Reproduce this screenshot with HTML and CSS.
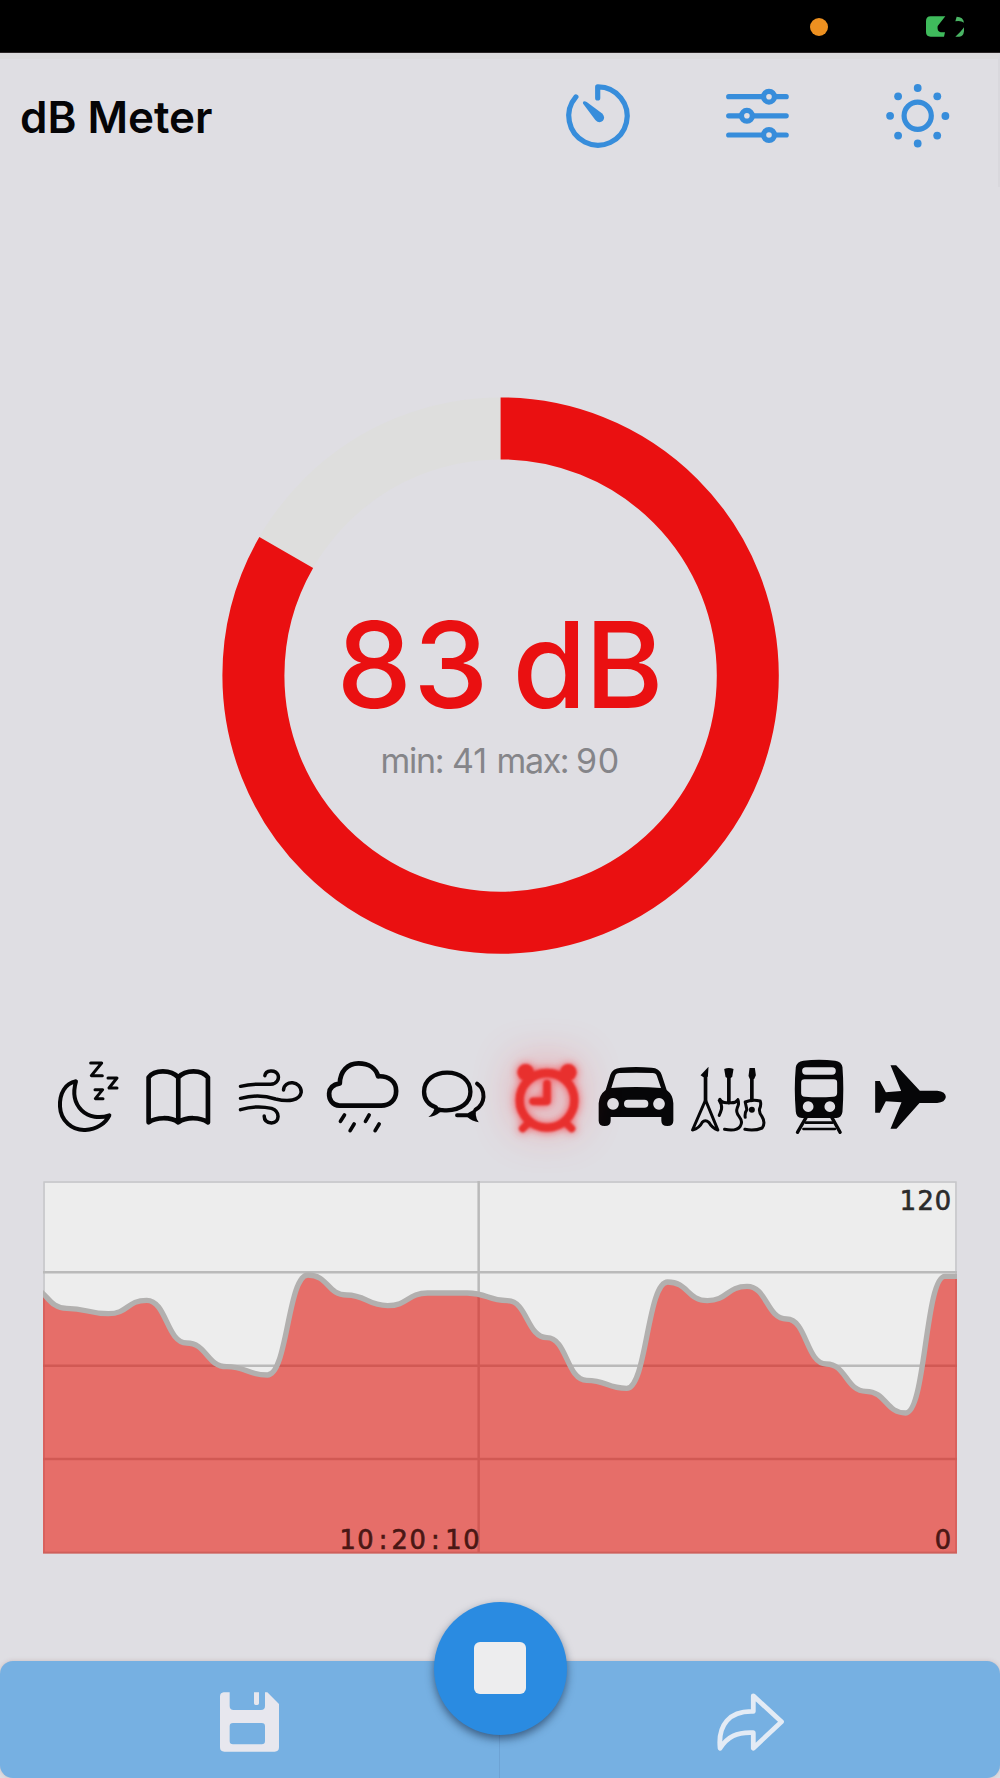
FILE: index.html
```html
<!DOCTYPE html>
<html lang="en">
<head>
<meta charset="utf-8">
<title>dB Meter</title>
<link rel="stylesheet" href="styles.css">
</head>
<body>
<div class="app">
  <div class="status">
    <span class="mic-dot"></span>
    <svg class="battery" width="38" height="21" viewBox="0 0 114 63">
      <path fill="#3fbb5c" d="M14 1H58L35 30Q32 46 44 49H57L54 62H14Q0 62 0 48V15Q0 1 14 1Z"/>
      <path fill="#4ab565" d="M92 2Q112 2 114 20Q105 13 88 16ZM114 34V46Q112 62 100 62H88Q106 46 114 34Z"/>
    </svg>
  </div>

  <header class="toolbar">
    <h1 class="title">dB Meter</h1>
    <nav class="tools">
      <svg class="tool" viewBox="0.3 0 80 80" fill="none" stroke-linecap="round" stroke-linejoin="round">
        <path d="M18.2 20.9A29.2 29.2 0 1 0 40 10.8V22"/>
        <path class="solid" d="M25.8 25.4Q27 24.7 29 26L44.5 37.5Q48 41.5 45.2 44.8Q41.5 48 37.6 44L25.4 27.8Q24.8 26.3 25.8 25.4Z"/>
      </svg>
      <svg class="tool" viewBox="0.3 0 80 80" fill="none" stroke-linecap="round">
        <path d="M11 20.7H45M57 20.7H68.5M11 39.8H23M35 39.8H68.5M11 59H45M57 59H68.5"/>
        <circle cx="51.3" cy="20.7" r="5.4"/><circle cx="29.2" cy="39.8" r="5.4"/><circle cx="51.3" cy="59" r="5.4"/>
      </svg>
      <svg class="tool" viewBox="0.3 0 80 80" fill="none">
        <circle cx="40" cy="39.8" r="13.6"/>
        <g class="solid">
          <circle cx="40" cy="12" r="3.9"/><circle cx="59.6" cy="20.3" r="3.9"/><circle cx="67.7" cy="40" r="3.9"/><circle cx="59.5" cy="59.6" r="3.9"/>
          <circle cx="40" cy="67.5" r="3.9"/><circle cx="20.4" cy="59.6" r="3.9"/><circle cx="12.4" cy="39.8" r="3.9"/><circle cx="20.4" cy="20.3" r="3.9"/>
        </g>
      </svg>
    </nav>
  </header>

  <main class="main">
    <section class="gauge">
      <svg width="560" height="560" viewBox="-280.6 -280.6 560 560">
        <circle class="track" r="247.2"/>
        <circle class="level" r="247.2" pathLength="100" stroke-dasharray="83.3 100" transform="rotate(-90)"/>
        <text class="value" y="31.9"><tspan x="-164" textLength="152">83</tspan><tspan x="12" textLength="151">dB</tspan></text>
        <text class="range" y="97.2"><tspan x="-120" textLength="64">min:</tspan><tspan x="-48.5" textLength="35">41</tspan><tspan x="-4" textLength="73">max:</tspan><tspan x="75.5" textLength="43">90</tspan></text>
      </svg>
    </section>

    <section class="scenes">
      <svg class="scene" viewBox="9 0 274.2 330">
        <path class="line" stroke-width="12" d="M108 124C76 130 58 160 60 200C62 242 96 272 136 270C170 268 197 250 208 226C180 236 146 232 125 211C102 188 98 158 108 124Z"/>
        <path class="line" stroke-width="9" d="M152 69H185L154 107H187M204 114H231L207 144H231M165 149H188L166 176H189"/>
      </svg>
      <svg class="scene" viewBox="283.2 0 274.2 330">
        <path class="line" stroke-width="14" d="M416 112C394 88 345 88 327 112V247C350 231 394 230 416 247C440 230 482 231 505 247V112C486 88 438 88 416 112ZM416 112V247"/>
      </svg>
      <svg class="scene" viewBox="557.4 0 274.2 330">
        <path class="line" stroke-width="10.5" d="M601 139C645 128 669 134 691 133C711 132 718 116 713 104C706 88 676 89 674 107M601 175C639 165 676 167 706 177C743 186 779 183 783 157C784 121 731 119 730 150M601 209C637 198 672 200 694 205C721 214 719 248 694 249C678 248 672 241 672 228"/>
      </svg>
      <svg class="scene" viewBox="51.6 0 274.2 330">
        <path class="line" stroke-width="14" d="M119 197C98 196 87 179 88 160C89 142 103 133 120 130C121 94 143 70 176 70C207 70 229 85 235 109C266 107 289 124 289 153C289 181 269 197 244 197Z"/>
        <path class="line" stroke-width="11" d="M134 225L122 244M163 252L151 272M208 225L197 244M238 252L226 272"/>
      </svg>
      <svg class="scene" viewBox="325.8 0 274.2 330">
        <path class="line" stroke-width="13" d="M406 202C383 193 371 177 371 155C371 120 402 98 440 98C480 98 510 121 510 155C510 188 481 210 439 211C429 211 422 210 416 210"/>
        <path d="M403 199Q403 217 384 231Q405 230 419 216L430 206Z"/>
        <path class="line" stroke-width="12" d="M530 131C557 150 556 191 525 209M470 226H509"/>
        <path d="M503 219L530 204Q520 227 535 247Q515 244 501 231Z"/>
      </svg>
      <svg class="scene alarm" viewBox="600 0 274.2 330">
        <circle cx="741" cy="181" r="82" fill="none" stroke="currentColor" stroke-width="25"/>
        <circle cx="677" cy="97" r="25"/><circle cx="805" cy="97" r="25"/>
        <path fill="none" stroke="currentColor" stroke-width="22" stroke-linecap="round" d="M688 246L668 266M795 246L815 266"/>
        <path fill="none" stroke="currentColor" stroke-width="23" stroke-linecap="round" stroke-linejoin="round" d="M741 131V184H699"/>
      </svg>
      <svg class="scene" viewBox="33 0 274.2 330">
        <path fill-rule="evenodd" d="M122 83Q168 79 215 83Q238 84 245 104L260 150Q279 164 280 190V242Q280 258 262 258Q244 258 244 242V231H92V242Q92 258 74 258Q56 258 56 242V190Q58 164 77 150L91 104Q98 85 122 83ZM119 99Q108 99 105 109L94 144Q168 138 243 144L231 109Q228 99 218 99Q168 97 119 99ZM99 174A17.5 17.5 0 1 0 99.1 174ZM237 174A17.5 17.5 0 1 0 237.1 174ZM144 179A12 12 0 0 0 144 203H193A12 12 0 0 0 193 179Z"/>
      </svg>
      <svg class="scene" viewBox="308.4 0 274.2 330">
        <path d="M385 80L383 110L370 112L361 106ZM432 87Q446 81 460 87L456 111Q446 118 436 111ZM508 84H524L527 106L522 117H509L505 108Z"/>
        <path class="line" stroke-width="11" stroke-linecap="butt" d="M376 104V181M446 105V188M515 112V181"/>
        <path class="line" stroke-width="9" d="M376 180L337 270Q357 265 366 247Q375 237 386 247Q396 265 413 270Z"/>
        <path class="line" stroke-width="9" d="M419 178Q426 191 446 188Q466 191 473 179Q478 190 471 204Q466 216 477 230Q489 246 480 259Q469 275 433 268M417 181Q426 193 424 207Q421 218 417 226"/>
        <path class="line" stroke-width="9" d="M495 232Q493 219 500 209L495 186Q515 178 540 183Q544 194 538 207Q536 217 545 229Q557 248 546 264Q522 274 494 268"/>
        <circle cx="515" cy="209" r="9"/>
      </svg>
      <svg class="scene" viewBox="12.6 0 274.2 330">
        <path fill-rule="evenodd" d="M101 62Q147 57 196 62Q215 64 218 82Q223 145 218 215Q216 232 200 234H96Q79 232 78 215Q72 145 78 82Q81 64 101 62ZM108 82A11 11 0 0 0 108 104H187A11 11 0 0 0 187 82ZM104 118Q94 118 94 128V159Q94 170 105 170Q147 174 190 170Q202 170 202 159V128Q202 118 192 118ZM115 184A16 16 0 1 0 115.1 184ZM180 184A16 16 0 1 0 180.1 184Z"/>
        <path class="line" stroke-width="10" d="M109 232L83 277M186 232L211 277"/><path class="line" stroke-width="8" d="M108 248H188M101 267H195"/>
      </svg>
      <svg class="scene" viewBox="288.5 0 274.2 330">
        <path d="M362 76H379L450 152H502Q528 155 528 171Q526 187 502 189H449L380 266H362L395 187L348 184L330 218H316V123H330L348 157L394 153Z"/>
      </svg>
    </section>

    <section class="chart">
      <svg width="914" height="373" viewBox="39 34 2742 1119">
        <rect class="plot" x="39" y="34" width="2742" height="1118"/>
        <rect class="frame" x="42" y="37" width="2736" height="1112"/>
        <path class="grid" d="M39 308H2781M39 588H2781M39 868H2781M1346 34V1150"/>
        <path class="area" d="M-10 350C50 350 50 416 110 416S175 432 235 432S290 392 350 392S410 520 470 520S530 591 590 591S651 616 712 616S773 316 834 316S892 376 950 376S1012 408 1073 408S1133 370 1193 370H1312C1372 370 1372 393 1432 393S1491 504 1551 504S1610 632 1670 632S1730 656 1790 656S1852 337 1913 337S1972 393 2032 393S2091 350 2151 350S2210 448 2270 448S2329 583 2389 583S2448 665 2508 665S2567 730 2627 730S2686 320 2745 320H2800V1151H-10Z"/>
        <path class="curve" d="M-10 350C50 350 50 416 110 416S175 432 235 432S290 392 350 392S410 520 470 520S530 591 590 591S651 616 712 616S773 316 834 316S892 376 950 376S1012 408 1073 408S1133 370 1193 370H1312C1372 370 1372 393 1432 393S1491 504 1551 504S1610 632 1670 632S1730 656 1790 656S1852 337 1913 337S1972 393 2032 393S2091 350 2151 350S2210 448 2270 448S2329 583 2389 583S2448 665 2508 665S2567 730 2627 730S2686 320 2745 320H2800"/>
        <path class="base" d="M39 1149H2781"/>
        <text class="label" x="2634 2687 2739" y="122">120</text>
        <text class="label on-area" x="2739" y="1137">0</text>
        <text class="label on-area" x="953 1006 1059 1109 1163 1216 1270 1324" y="1137">10:20:10</text>
      </svg>
    </section>
  </main>

  <footer class="bar">
    <div class="action">
      <svg width="61" height="62" viewBox="657 333 183 186">
        <path fill="#e7e7ee" fill-rule="evenodd" d="M671 337H689V378Q689 390 701 390H783Q795 390 795 378V337H802L837 372V502Q837 515 824 515H673Q660 515 660 502V350Q660 338 671 337ZM699 429Q689 429 689 439V483Q689 493 699 493H785Q795 493 795 483V439Q795 429 785 429ZM762 337H777V370Q777 375 772 375H767Q762 375 762 370Z"/>
      </svg>
    </div>
    <div class="action">
      <svg width="73" height="64" viewBox="0 0 73 64">
        <path fill="none" stroke="#e3ebf5" stroke-width="4.8" stroke-linejoin="round" d="M39.3 5.8L67.5 31.8L39.3 58.2V42.7C22.5 41.8 13.5 47 6.1 58.2C3.7 35 15.5 20.5 39.3 21.4Z"/>
      </svg>
    </div>
    <button class="stop" aria-label="Stop"><span class="stop-square"></span></button>
  </footer>
</div>
</body>
</html>
```

FILE: styles.css
```css
* { box-sizing: border-box; }
body { margin: 0; background: #dfdee3; font-family: Inter, "Liberation Sans", sans-serif; }
svg { display: block; }

.app { width: 1000px; height: 1778px; display: flex; flex-direction: column; overflow: hidden; }

.status {
  height: 53px; flex: none; background: #000; border-bottom: 1px solid #2a2526;
  display: flex; align-items: center; justify-content: flex-end; padding-right: 36px; gap: 98px;
}
.mic-dot { width: 18px; height: 18px; border-radius: 50%; background: #ed9020; margin-top: 2px; }

.toolbar {
  height: 134px; flex: none; border-top: 6px solid #dbdadc; border-right: 2px solid #d9d8dd;
  display: flex; align-items: flex-start; justify-content: space-between; padding: 0 40px 0 20px;
}
.title { margin: 32px 0 0; font-size: 44px; line-height: 52px; font-weight: 600; letter-spacing: -0.05px; color: #050507; }
.tools { display: flex; gap: 80px; margin-top: 17px; }
.tool { width: 80px; height: 80px; stroke: #378ddb; stroke-width: 5.2; }
.solid { fill: #378ddb; stroke: none; }

.main { flex: 1; display: flex; flex-direction: column; }
.gauge { padding: 208px 0 0 220px; height: 853px; flex: none; }
.track, .level { fill: none; stroke-width: 62; }
.track { stroke: #dededd; }
.level { stroke: #ea1011; }
.value { font-size: 120px; font-weight: 500; fill: #ea1011; }
.range { font-size: 34px; fill: #858589; }

.scenes { display: grid; grid-template-columns: repeat(10, 1fr); height: 110px; margin: 0 43px; flex: none; }
.scene { width: 100%; height: 110px; fill: #060608; overflow: visible; }
.line { fill: none; stroke: #060608; stroke-linecap: round; stroke-linejoin: round; }
.alarm {
  color: #e8302e; fill: #e8302e;
  filter: blur(1.2px) drop-shadow(0 0 4px rgba(255, 20, 25, .7)) drop-shadow(0 -3px 20px rgba(255, 60, 70, .42));
}

.chart { margin: 31px 43px 0; }
.plot { fill: #ededed; }
.frame { fill: none; stroke: #c6c6ca; stroke-width: 5; }
.grid { stroke: #bababa; stroke-width: 7.5; fill: none; }
.area { fill: rgba(225, 25, 17, .6); }
.curve { fill: none; stroke: #b2b0af; stroke-width: 16; }
.base { stroke: #cf5f5b; stroke-width: 5; }
.label { font: 77px "DejaVu Sans", sans-serif; text-anchor: middle; fill: #2b2b2b; stroke: #2b2b2b; stroke-width: 2; }
.on-area { fill: #4a1714; stroke: #4a1714; }

.bar {
  position: relative; height: 117px; flex: none; border-radius: 13px;
  background: #76b0e2; display: grid; grid-template-columns: 1fr 1fr;
  box-shadow: 0 0 4px rgba(140, 90, 90, .25);
}
.action { display: flex; align-items: center; justify-content: center; padding: 5px 2px 0 0; }
.action + .action { border-left: 1px solid #6da3d5; margin-left: -1px; padding-right: 0; }
.stop {
  position: absolute; left: 433.5px; top: -59px; width: 133px; height: 133px; padding: 0;
  display: grid; place-items: center; border: 0; border-radius: 50%; background: #2a8be1;
  box-shadow: 0 4px 9px rgba(20, 40, 70, .6);
}
.stop-square { width: 52px; height: 52px; border-radius: 6px; background: #ededee; margin-top: -2px; }
```
